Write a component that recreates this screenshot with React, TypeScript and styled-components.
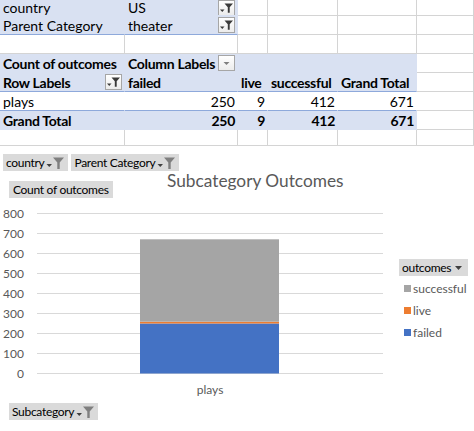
import React from 'react';
import styled, { createGlobalStyle } from 'styled-components';

const GlobalStyle = createGlobalStyle`
  html, body {
    margin: 0;
    padding: 0;
    background: #ffffff;
  }
  body {
    width: 474px;
    height: 431px;
    overflow: hidden;
  }
`;

type Kind = 'grid' | 'band' | 'pivot';

const BAND = '#d9e1f2';
const RULE = '#8ea9db';
const GRID = '#d4d4d4';
const FONT = "Lato, 'Liberation Sans', sans-serif";

const Page = styled.div`
  width: 474px;
  height: 431px;
  display: flex;
  flex-direction: column;
`;

const Sheet = styled.div`
  display: grid;
  grid-template-columns: 125px 113px 30px 70px 79px 57px;
  grid-template-rows: 16px repeat(6, 19px) 16px;
  font-family: ${FONT};
  font-size: 14px;
  color: #000;
`;

const Cell = styled.div<{ $kind?: Kind; $bold?: boolean; $right?: boolean; $rule?: boolean }>`
  box-sizing: border-box;
  min-width: 0;
  display: flex;
  align-items: center;
  justify-content: ${(p) => (p.$right ? 'flex-end' : 'space-between')};
  gap: 2px;
  padding: 0 2px 0 3px;
  white-space: nowrap;
  overflow: hidden;
  font-weight: ${(p) => (p.$bold ? 700 : 400)};
  letter-spacing: ${(p) => (p.$bold ? '-0.3px' : '0')};
  background: ${(p) => (p.$kind === 'band' ? BAND : '#ffffff')};
  border-right: 1px solid ${(p) => (!p.$kind || p.$kind === 'grid' ? GRID : 'transparent')};
  border-bottom: 1px solid
    ${(p) => (p.$rule ? RULE : !p.$kind || p.$kind === 'grid' ? GRID : 'transparent')};
`;

const SheetButton = styled.span`
  box-sizing: border-box;
  flex: none;
  width: 17px;
  height: 16px;
  display: flex;
  align-items: center;
  justify-content: center;
  border: 1px solid #a6a6a6;
  background: linear-gradient(#ffffff, #ececec);
`;

const FilterGlyph = () => (
  <svg width="15" height="14" viewBox="0 0 15 14">
    <path d="M1 8.5h4.5l-2.25 2.5z" fill="#3a3a3a" />
    <path d="M5.5 2.5h8.5l-3.3 3.8v5.5H8.8V6.3z" fill="#3a3a3a" />
  </svg>
);

const DropGlyph = () => (
  <svg width="15" height="14" viewBox="0 0 15 14">
    <path d="M4.5 6h6l-3 3z" fill="#7f7f7f" />
  </svg>
);

const Chart = styled.section`
  flex: 1;
  display: flex;
  flex-direction: column;
  background: #ffffff;
  font-family: ${FONT};
  color: #000;
`;

const FilterBar = styled.div`
  display: flex;
  gap: 3px;
  padding: 8px 0 0 3px;
`;

const FieldButton = styled.div`
  height: 17px;
  display: flex;
  align-items: center;
  gap: 2px;
  padding: 0 3px;
  background: #dadada;
  font-size: 12px;
  letter-spacing: -0.3px;
  white-space: nowrap;
`;

const TitleRow = styled.div`
  height: 29px;
  display: grid;
  grid-template-columns: 167px auto;
  align-items: start;
`;

const CountButton = styled(FieldButton)`
  justify-self: start;
  margin: 10px 0 0 9px;
  padding: 0 4px;
`;

const Title = styled.h1`
  margin: -1px 0 0 0;
  font-size: 17.3px;
  font-weight: 400;
  color: #595959;
  line-height: 22px;
  white-space: nowrap;
`;

const PlotRow = styled.div`
  display: flex;
  height: 203px;
`;

const Legend = styled.div`
  display: flex;
  flex-direction: column;
  margin: 59px 0 0 9px;
`;

const LegendHead = styled(FieldButton)`
  width: 69px;
  box-sizing: border-box;
  justify-content: space-between;
  padding: 0 6px 0 3px;
  margin-bottom: 1px;
`;

const LegendItem = styled.div`
  height: 22px;
  display: flex;
  align-items: center;
  gap: 2px;
  padding-left: 5px;
  font-size: 12px;
  color: #595959;
`;

const Swatch = styled.span<{ $color: string }>`
  width: 7px;
  height: 7px;
  background: ${(p) => p.$color};
`;

const FooterRow = styled.div`
  display: flex;
  padding-left: 9px;
`;

const ChartFunnel = () => (
  <svg width="19" height="14" viewBox="0 0 19 14">
    <path d="M0.5 8h5.5l-2.75 3z" fill="#404040" />
    <path d="M7 1.5h11l-4.3 5V13h-2.4V6.5z" fill="#7f7f7f" />
  </svg>
);

const series = [
  { name: 'failed', value: 250, color: '#4472c4' },
  { name: 'live', value: 9, color: '#ed7d31' },
  { name: 'successful', value: 412, color: '#a5a5a5' },
];

const ticks = [800, 700, 600, 500, 400, 300, 200, 100, 0];
const base = 173.5;
const scale = 0.2;

const Plot = () => {
  let acc = 0;
  return (
    <svg width="390" height="203" viewBox="0 0 390 203">
      {ticks.map((t) => (
        <g key={t}>
          <line x1="37" x2="383" y1={base - t * scale} y2={base - t * scale} stroke="#d9d9d9" strokeWidth="1" />
          <text
            x="24"
            y={base - t * scale}
            textAnchor="end"
            dominantBaseline="central"
            fontSize="12"
            fill="#595959"
            fontFamily={FONT}
          >
            {t}
          </text>
        </g>
      ))}
      {series.map((s) => {
        const y0 = base - acc * scale;
        acc += s.value;
        const y1 = base - acc * scale;
        return <rect key={s.name} x="140" y={y1} width="139" height={y0 - y1} fill={s.color} />;
      })}
      <text
        x="210"
        y="189"
        textAnchor="middle"
        dominantBaseline="central"
        fontSize="12"
        fill="#595959"
        fontFamily={FONT}
      >
        plays
      </text>
    </svg>
  );
};

export default function App() {
  return (
    <Page>
      <GlobalStyle />
      <Sheet>
        <Cell $kind="band">country</Cell>
        <Cell $kind="band">
          <span>US</span>
          <SheetButton><FilterGlyph /></SheetButton>
        </Cell>
        <Cell /><Cell /><Cell /><Cell />

        <Cell $kind="band" $rule>Parent Category</Cell>
        <Cell $kind="band" $rule>
          <span>theater</span>
          <SheetButton><FilterGlyph /></SheetButton>
        </Cell>
        <Cell /><Cell /><Cell /><Cell />

        <Cell /><Cell /><Cell /><Cell /><Cell /><Cell />

        <Cell $kind="band" $bold>Count of outcomes</Cell>
        <Cell $kind="band" $bold>
          <span>Column Labels</span>
          <SheetButton><DropGlyph /></SheetButton>
        </Cell>
        <Cell $kind="band" /><Cell $kind="band" /><Cell $kind="band" />
        <Cell />

        <Cell $kind="band" $bold $rule>
          <span>Row Labels</span>
          <SheetButton><FilterGlyph /></SheetButton>
        </Cell>
        <Cell $kind="band" $bold $rule>failed</Cell>
        <Cell $kind="band" $bold $rule>live</Cell>
        <Cell $kind="band" $bold $rule>successful</Cell>
        <Cell $kind="band" $bold $rule>Grand Total</Cell>
        <Cell />

        <Cell $kind="pivot" $rule>plays</Cell>
        <Cell $kind="pivot" $rule $right>250</Cell>
        <Cell $kind="pivot" $rule $right>9</Cell>
        <Cell $kind="pivot" $rule $right>412</Cell>
        <Cell $kind="pivot" $rule $right>671</Cell>
        <Cell />

        <Cell $kind="band" $bold>Grand Total</Cell>
        <Cell $kind="band" $bold $right>250</Cell>
        <Cell $kind="band" $bold $right>9</Cell>
        <Cell $kind="band" $bold $right>412</Cell>
        <Cell $kind="band" $bold $right>671</Cell>
        <Cell />

        <Cell /><Cell /><Cell /><Cell /><Cell /><Cell />
      </Sheet>

      <Chart>
        <FilterBar>
          <FieldButton>country<ChartFunnel /></FieldButton>
          <FieldButton>Parent Category<ChartFunnel /></FieldButton>
        </FilterBar>
        <TitleRow>
          <CountButton>Count of outcomes</CountButton>
          <Title>Subcategory Outcomes</Title>
        </TitleRow>
        <PlotRow>
          <Plot />
          <Legend>
            <LegendHead>
              outcomes
              <svg width="7" height="4" viewBox="0 0 7 4"><path d="M0 0h7L3.5 4z" fill="#404040" /></svg>
            </LegendHead>
            {[...series].reverse().map((s) => (
              <LegendItem key={s.name}>
                <Swatch $color={s.color} />
                {s.name}
              </LegendItem>
            ))}
          </Legend>
        </PlotRow>
        <FooterRow>
          <FieldButton>Subcategory<ChartFunnel /></FieldButton>
        </FooterRow>
      </Chart>
    </Page>
  );
}
